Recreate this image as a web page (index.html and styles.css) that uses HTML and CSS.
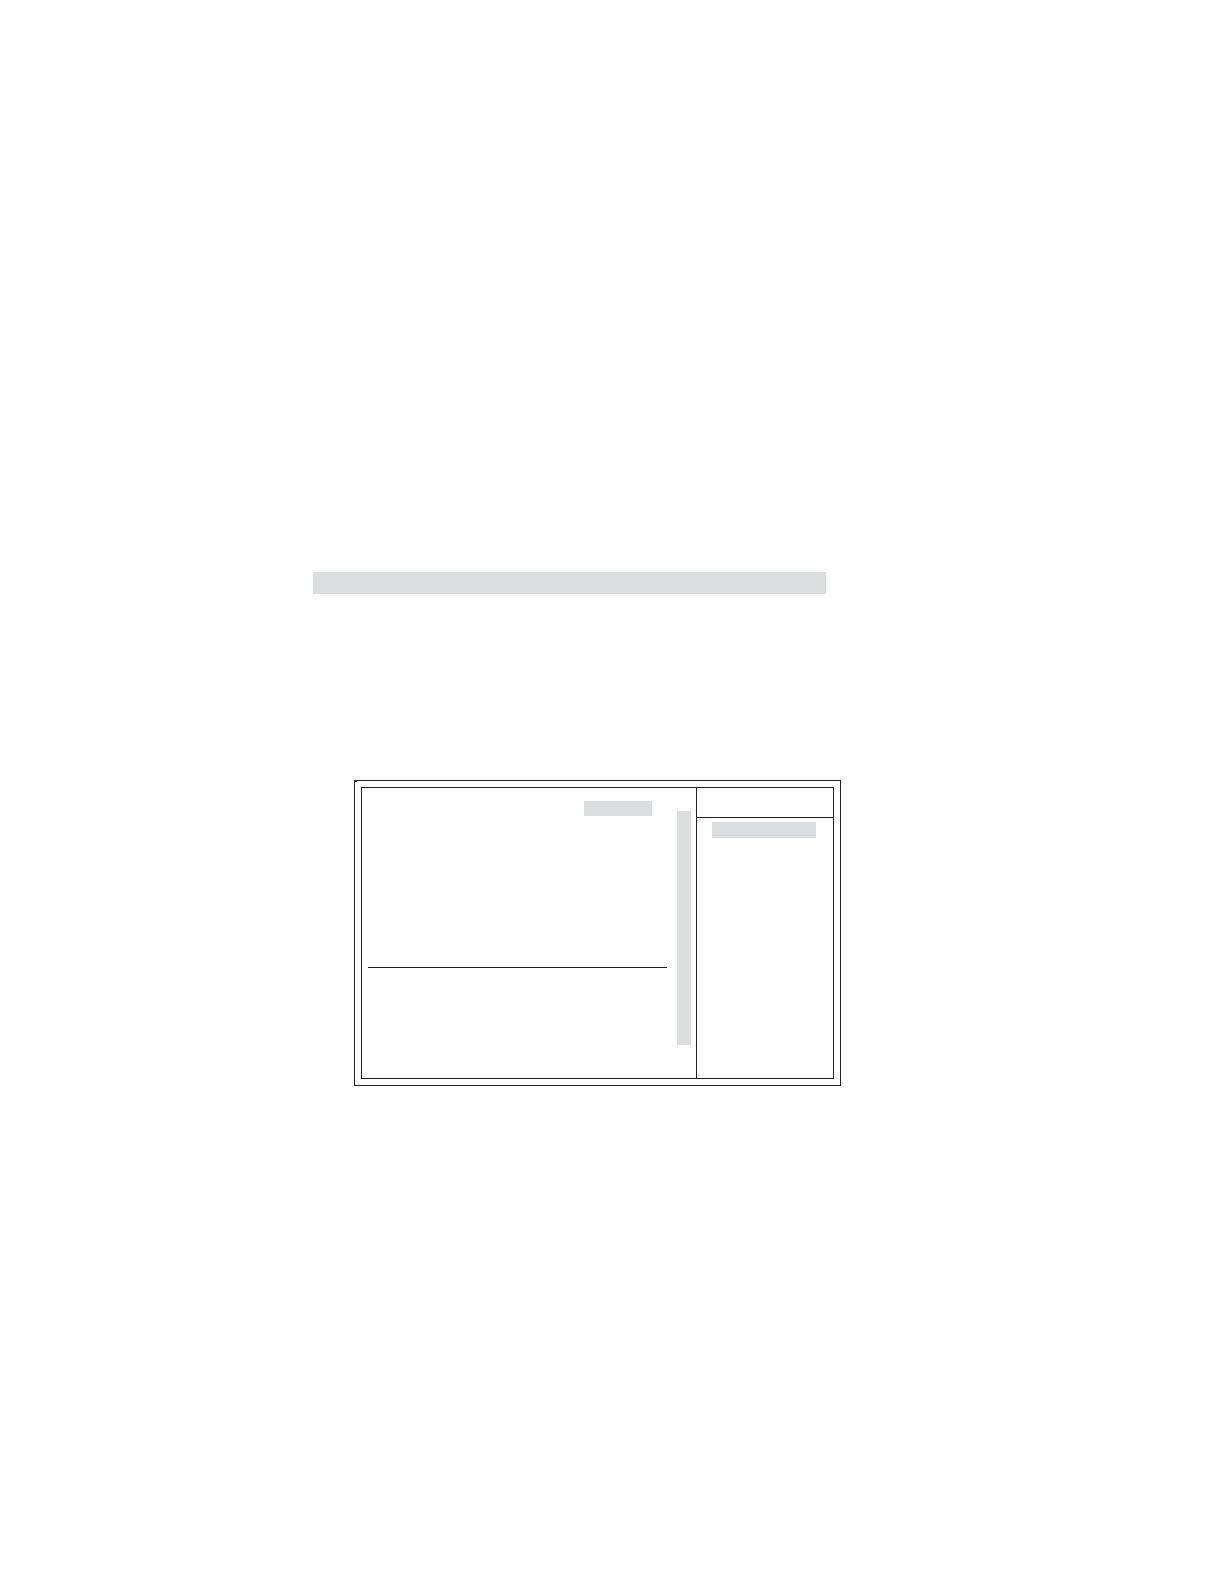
FILE: index.html
```html
<!DOCTYPE html>
<html lang="en">
<head>
    <meta charset="UTF-8">
    <meta name="viewport" content="width=device-width, initial-scale=1.0">
    <title>Setup Menu</title>
    <link rel="stylesheet" href="styles.css">
</head>
<body>
    <main class="page">
        <div class="heading-bar"></div>

        <!-- Setup screen -->
        <section class="screen">
            <div class="screen-inner">
                <div class="main-panel">
                    <div class="options">
                        <div class="option-list">
                            <div class="selected-value"></div>
                        </div>
                        <hr class="rule">
                        <div class="notes"></div>
                    </div>
                    <div class="scrollbar"></div>
                </div>
                <aside class="side-panel">
                    <div class="side-header"></div>
                    <div class="side-body">
                        <div class="side-title"></div>
                    </div>
                </aside>
            </div>
        </section>
    </main>
</body>
</html>
```

FILE: styles.css
```css
:root {
    --line-color: #231f20;
    --fill-color: #dcddde;
    --background-color: #ffffff;
}

* {
    box-sizing: border-box;
    margin: 0;
    padding: 0;
}

body {
    font-family: "Liberation Sans", sans-serif;
    background-color: var(--background-color);
    color: var(--line-color);
}

.page {
    display: grid;
    grid-template-columns: 313fr 41fr 472fr 15fr 383fr;
    align-content: start;
    row-gap: 186px;
    min-height: 100vh;
    padding-top: 572px;
}

.heading-bar {
    grid-column: 2 / 4;
    height: 22px;
    background-color: var(--fill-color);
}

.screen {
    position: relative;
    grid-column: 3 / 5;
    padding: 6px;
    border: 1px solid var(--line-color);
}

/* heavier stroke at the frame's top left corner */
.screen::before {
    content: "";
    position: absolute;
    top: 0;
    left: 0;
    width: 2px;
    height: 1px;
    background-color: var(--line-color);
}

.screen-inner {
    display: grid;
    grid-template-columns: 334fr 137fr;
    border: 1px solid var(--line-color);
}

.main-panel {
    display: flex;
    gap: 10px;
    padding: 0 5px 0 6px;
}

.options {
    flex: 1;
}

.option-list {
    min-height: 179px;
    padding: 13px 15px 0 0;
}

.selected-value {
    width: 24%;
    height: 15px;
    margin-left: auto;
    background-color: var(--fill-color);
}

.rule {
    border: none;
    border-top: 1px solid var(--line-color);
}

.notes {
    min-height: 110px;
}

.scrollbar {
    width: 14px;
    margin: 23px 0 33px;
    background-color: var(--fill-color);
}

.side-panel {
    border-left: 1px solid var(--line-color);
}

.side-header {
    height: 30px;
    border-bottom: 1px solid var(--line-color);
}

.side-body {
    padding: 4px 17px 0 15px;
}

.side-title {
    height: 16px;
    background-color: var(--fill-color);
}
```
